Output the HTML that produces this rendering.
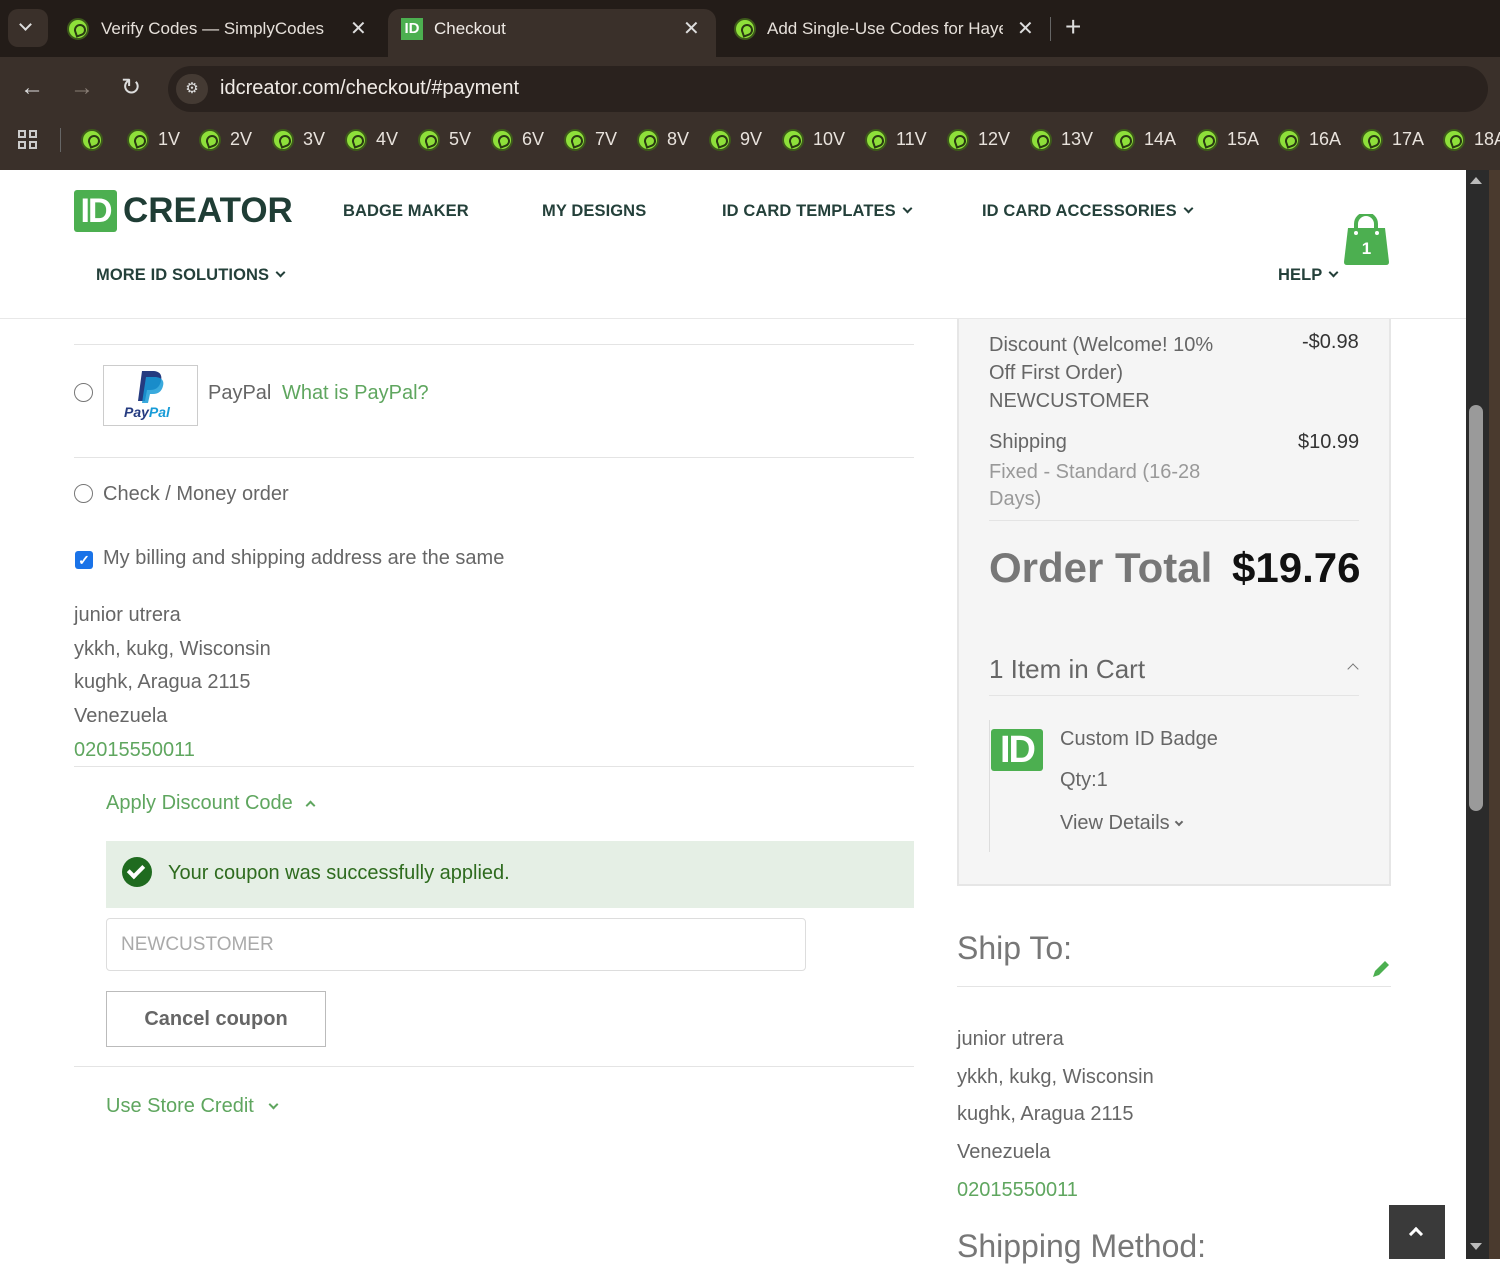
<!DOCTYPE html>
<html><head><meta charset="utf-8"><style>
*{margin:0;padding:0;box-sizing:border-box}
body{width:1500px;height:1259px;overflow:hidden;position:relative;background:#fff;font-family:"Liberation Sans",sans-serif}
.a{position:absolute;white-space:nowrap}
.ico{position:absolute;width:22px;height:22px;border-radius:50%;background:#8ee03a;border:2px solid #3d5a1a}
.ico:after{content:"";position:absolute;left:5px;top:4px;width:8px;height:8px;border:2px solid #2a3a12;border-radius:50% 50% 50% 0;transform:rotate(-20deg)}
.bk{color:#e8e2dc;font-size:18px;top:129px}
.nav{font-weight:bold;font-size:16.5px;color:#24403a;letter-spacing:.1px}
.g{color:#666}
.gr{color:#5fa65f}
.t20{font-size:20px}
.hr{position:absolute;height:1px;background:#e4e4e4}
.chev{display:inline-block;width:7px;height:7px;border-right:2px solid currentColor;border-bottom:2px solid currentColor;transform:rotate(45deg);margin-left:8px;position:relative;top:-4px}
.chevu{display:inline-block;width:7px;height:7px;border-left:2px solid currentColor;border-top:2px solid currentColor;transform:rotate(45deg);margin-left:14px;position:relative;top:0px}
</style></head><body>
<!-- tab bar -->
<div class="a" style="left:0;top:0;width:1500px;height:57px;background:#231c18"></div>
<div class="a" style="left:8px;top:9px;width:40px;height:38px;border-radius:10px;background:#3a302a"></div>
<div class="a" style="left:21px;top:20px;width:9px;height:9px;border-right:2px solid #ddd;border-bottom:2px solid #ddd;transform:rotate(45deg)"></div>
<div class="ico" style="left:67px;top:18px"></div>
<div class="a" style="left:101px;top:19px;color:#e6e0da;font-size:17px">Verify Codes — SimplyCodes</div>
<div class="a" style="left:350px;top:16px;color:#ddd;font-size:20px">✕</div>
<div class="a" style="left:388px;top:9px;width:328px;height:52px;border-radius:12px 12px 0 0;background:#3a302a"></div>
<div class="a" style="left:401px;top:18px;width:22px;height:22px;background:#4caf50;color:#fff;font-weight:bold;font-size:15px;text-align:center;line-height:22px">ID</div>
<div class="a" style="left:434px;top:19px;color:#f0ebe6;font-size:17px">Checkout</div>
<div class="a" style="left:683px;top:16px;color:#ddd;font-size:20px">✕</div>
<div class="ico" style="left:734px;top:18px"></div>
<div class="a" style="left:767px;top:19px;color:#e6e0da;font-size:17px;width:236px;overflow:hidden">Add Single-Use Codes for Hayes</div>
<div class="a" style="left:1017px;top:16px;color:#ddd;font-size:20px">✕</div>
<div class="a" style="left:1050px;top:17px;width:1px;height:24px;background:#666"></div>
<div class="a" style="left:1065px;top:11px;color:#ddd;font-size:28px">+</div>
<!-- toolbar -->
<div class="a" style="left:0;top:57px;width:1500px;height:113px;background:#3a302a"></div>
<div class="a" style="left:20px;top:74px;color:#ddd;font-size:24px">←</div>
<div class="a" style="left:70px;top:74px;color:#8a7f77;font-size:24px">→</div>
<div class="a" style="left:121px;top:73px;color:#ddd;font-size:24px">↻</div>
<div class="a" style="left:168px;top:66px;width:1320px;height:46px;border-radius:23px;background:#2a221e"></div>
<div class="a" style="left:176px;top:74px;width:32px;height:30px;border-radius:15px;background:#443a33;color:#ddd;font-size:15px;text-align:center;line-height:30px">⚙</div>
<div class="a" style="left:220px;top:77px;color:#f0ebe6;font-size:20px">idcreator.com/checkout/#payment</div>
<!-- bookmarks -->
<div class="a" style="left:18px;top:130px;width:20px;height:20px;border:0">
 <div class="a" style="left:0;top:0;width:8px;height:8px;border:2px solid #ccc"></div><div class="a" style="left:11px;top:0;width:8px;height:8px;border:2px solid #ccc"></div>
 <div class="a" style="left:0;top:11px;width:8px;height:8px;border:2px solid #ccc"></div><div class="a" style="left:11px;top:11px;width:8px;height:8px;border:2px solid #ccc"></div></div>
<div class="a" style="left:60px;top:128px;width:1px;height:24px;background:#666"></div>
<div class="ico" style="left:81px;top:129px"></div>
<div class="ico" style="left:127px;top:129px"></div><div class="a bk" style="left:158px">1V</div>
<div class="ico" style="left:199px;top:129px"></div><div class="a bk" style="left:230px">2V</div>
<div class="ico" style="left:272px;top:129px"></div><div class="a bk" style="left:303px">3V</div>
<div class="ico" style="left:345px;top:129px"></div><div class="a bk" style="left:376px">4V</div>
<div class="ico" style="left:418px;top:129px"></div><div class="a bk" style="left:449px">5V</div>
<div class="ico" style="left:491px;top:129px"></div><div class="a bk" style="left:522px">6V</div>
<div class="ico" style="left:564px;top:129px"></div><div class="a bk" style="left:595px">7V</div>
<div class="ico" style="left:637px;top:129px"></div><div class="a bk" style="left:667px">8V</div>
<div class="ico" style="left:709px;top:129px"></div><div class="a bk" style="left:740px">9V</div>
<div class="ico" style="left:782px;top:129px"></div><div class="a bk" style="left:813px">10V</div>
<div class="ico" style="left:865px;top:129px"></div><div class="a bk" style="left:896px">11V</div>
<div class="ico" style="left:947px;top:129px"></div><div class="a bk" style="left:978px">12V</div>
<div class="ico" style="left:1030px;top:129px"></div><div class="a bk" style="left:1061px">13V</div>
<div class="ico" style="left:1113px;top:129px"></div><div class="a bk" style="left:1144px">14A</div>
<div class="ico" style="left:1196px;top:129px"></div><div class="a bk" style="left:1227px">15A</div>
<div class="ico" style="left:1278px;top:129px"></div><div class="a bk" style="left:1309px">16A</div>
<div class="ico" style="left:1361px;top:129px"></div><div class="a bk" style="left:1392px">17A</div>
<div class="ico" style="left:1443px;top:129px"></div><div class="a bk" style="left:1474px">18A</div>
<!-- scrollbar -->
<div class="a" style="left:1466px;top:170px;width:23px;height:1089px;background:#2b2b2b"></div>
<div class="a" style="left:1489px;top:170px;width:11px;height:1089px;background:#4a3a2e"></div>
<div class="a" style="left:1469px;top:405px;width:14px;height:406px;border-radius:7px;background:#9a9a9a"></div>
<div class="a" style="left:1470px;top:177px;width:0;height:0;border-left:6px solid transparent;border-right:6px solid transparent;border-bottom:7px solid #bbb"></div>
<div class="a" style="left:1470px;top:1243px;width:0;height:0;border-left:6px solid transparent;border-right:6px solid transparent;border-top:7px solid #bbb"></div>
<!-- header -->
<div class="a" style="left:74px;top:190px;width:43px;height:42px;background:#4caf50;border-radius:3px;color:#fff;font-weight:bold;font-size:34px;line-height:42px;text-align:center;letter-spacing:-2px">ID</div>
<div class="a" style="left:123px;top:191px;color:#1f3d35;font-weight:bold;font-size:35px;letter-spacing:0">CREATOR</div>
<div class="a nav" style="left:343px;top:202px">BADGE MAKER</div>
<div class="a nav" style="left:542px;top:202px">MY DESIGNS</div>
<div class="a nav" style="left:722px;top:202px">ID CARD TEMPLATES<span class="chev"></span></div>
<div class="a nav" style="left:982px;top:202px">ID CARD ACCESSORIES<span class="chev"></span></div>
<div class="a nav" style="left:96px;top:266px">MORE ID SOLUTIONS<span class="chev"></span></div>
<div class="a nav" style="left:1278px;top:266px">HELP<span class="chev"></span></div>
<svg class="a" style="left:1342px;top:214px" width="49" height="52" viewBox="0 0 49 52"><path d="M14 16 V10 a10 10 0 0 1 20 0 V16" fill="none" stroke="#4caf50" stroke-width="4"/><path d="M6 14 H43 L47 48 Q47 51 44 51 H5 Q2 51 2 48 Z" fill="#4caf50"/><circle cx="14" cy="19" r="2" fill="#fff"/><circle cx="35" cy="19" r="2" fill="#fff"/><text x="24.5" y="40" font-family="Liberation Sans" font-weight="bold" font-size="17" fill="#fff" text-anchor="middle">1</text></svg>
<div class="hr" style="left:0;top:318px;width:1466px;background:#e8e8e8"></div>
<!-- left column -->
<div class="hr" style="left:74px;top:344px;width:840px"></div>
<div class="a" style="left:74px;top:383px;width:19px;height:19px;border-radius:50%;border:1.5px solid #777"></div>
<div class="a" style="left:103px;top:365px;width:95px;height:61px;border:1px solid #ccc;background:#fff"></div>
<svg class="a" style="left:136px;top:369px" width="30" height="36" viewBox="0 0 30 36"><path d="M6 2 H18 Q27 3 25 12 Q23 21 14 21 H11 L9 32 H2 Z" fill="#253b80"/><path d="M10 8 H20 Q29 9 27 17 Q25 25 17 25 H14 L12 34 H6 Z" fill="#179bd7" opacity=".85"/></svg>
<div class="a" style="left:124px;top:404px;font-size:14px;font-weight:bold;font-style:italic;color:#253b80">Pay<span style="color:#179bd7">Pal</span></div>
<div class="a g t20" style="left:208px;top:382px">PayPal <span class="gr" style="margin-left:5px">What is PayPal?</span></div>
<div class="hr" style="left:74px;top:457px;width:840px"></div>
<div class="a" style="left:74px;top:484px;width:19px;height:19px;border-radius:50%;border:1.5px solid #777"></div>
<div class="a g t20" style="left:103px;top:483px">Check / Money order</div>
<div class="a" style="left:75px;top:551px;width:18px;height:18px;border-radius:3px;background:#1a73e8;color:#fff;font-size:14px;line-height:18px;text-align:center;font-weight:bold">✓</div>
<div class="a g t20" style="left:103px;top:547px">My billing and shipping address are the same</div>
<div class="a g t20" style="left:74px;top:599px;line-height:33.7px">junior utrera<br>ykkh, kukg, Wisconsin<br>kughk, Aragua 2115<br>Venezuela<br><span class="gr">02015550011</span></div>
<div class="hr" style="left:74px;top:766px;width:840px"></div>
<div class="a gr t20" style="left:106px;top:792px">Apply Discount Code<span class="chevu"></span></div>
<div class="a" style="left:106px;top:841px;width:808px;height:67px;background:#e5efe5"></div>
<div class="a" style="left:122px;top:857px;width:30px;height:30px;border-radius:50%;background:#1f6b1f"></div>
<div class="a" style="left:131px;top:862px;width:10px;height:16px;border-right:4px solid #fff;border-bottom:4px solid #fff;transform:rotate(45deg)"></div>
<div class="a t20" style="left:168px;top:862px;color:#2e6b1e">Your coupon was successfully applied.</div>
<div class="a" style="left:106px;top:918px;width:700px;height:53px;border:1px solid #ddd;border-radius:4px"></div>
<div class="a" style="left:121px;top:934px;font-size:19px;color:#aaa">NEWCUSTOMER</div>
<div class="a" style="left:106px;top:991px;width:220px;height:56px;border:1px solid #bbb;font-size:20px;font-weight:bold;color:#666;text-align:center;line-height:54px">Cancel coupon</div>
<div class="hr" style="left:74px;top:1066px;width:840px"></div>
<div class="a gr t20" style="left:106px;top:1095px">Use Store Credit<span class="chev" style="margin-left:16px"></span></div>
<!-- summary -->
<div class="a" style="left:957px;top:319px;width:434px;height:567px;background:#f5f5f5;border:2px solid #e6e6e6;border-top:none"></div>
<div class="a g t20" style="left:989px;top:331px;line-height:28px">Discount (Welcome! 10%<br>Off First Order)<br>NEWCUSTOMER</div>
<div class="a t20" style="left:1302px;top:331px;color:#333">-$0.98</div>
<div class="a g t20" style="left:989px;top:431px">Shipping</div>
<div class="a t20" style="left:989px;top:459px;color:#999;line-height:27px">Fixed - Standard (16-28<br>Days)</div>
<div class="a t20" style="left:1298px;top:431px;color:#333">$10.99</div>
<div class="hr" style="left:989px;top:520px;width:370px"></div>
<div class="a" style="left:989px;top:544px;font-size:42px;font-weight:bold;color:#777">Order Total</div>
<div class="a" style="left:1232px;top:544px;font-size:42px;font-weight:bold;color:#111">$19.76</div>
<div class="a g" style="left:989px;top:654px;font-size:26px">1 Item in Cart</div>
<div class="a" style="left:1349px;top:665px;width:8px;height:8px;border-left:1.5px solid #777;border-top:1.5px solid #777;transform:rotate(45deg)"></div>
<div class="hr" style="left:989px;top:695px;width:370px"></div>
<div class="a" style="left:989px;top:720px;width:1px;height:132px;background:#ddd"></div>
<div class="a" style="left:991px;top:729px;width:52px;height:42px;background:#4caf50;border-radius:3px;color:#fff;font-weight:bold;font-size:38px;line-height:42px;text-align:center;letter-spacing:-2px">ID</div>
<div class="a g t20" style="left:1060px;top:728px">Custom ID Badge</div>
<div class="a g t20" style="left:1060px;top:769px">Qty:1</div>
<div class="a g t20" style="left:1060px;top:812px">View Details<span class="chev" style="margin-left:6px;width:6px;height:6px"></span></div>
<div class="a" style="left:957px;top:930px;font-size:32px;color:#777">Ship To:</div>
<svg class="a" style="left:1370px;top:958px" width="22" height="22" viewBox="0 0 22 22"><path d="M3 19 L5 13 L15 3 L19 7 L9 17 Z" fill="#4caf50"/></svg>
<div class="hr" style="left:957px;top:986px;width:434px"></div>
<div class="a g t20" style="left:957px;top:1021px;line-height:37.7px">junior utrera<br>ykkh, kukg, Wisconsin<br>kughk, Aragua 2115<br>Venezuela<br><span class="gr">02015550011</span></div>
<div class="a" style="left:957px;top:1228px;font-size:32px;color:#777">Shipping Method:</div>
<div class="a" style="left:1389px;top:1205px;width:56px;height:54px;background:#3a3a3a"></div>
<div class="a" style="left:1411px;top:1229px;width:10px;height:10px;border-left:3px solid #fff;border-top:3px solid #fff;transform:rotate(45deg)"></div>
</body></html>
